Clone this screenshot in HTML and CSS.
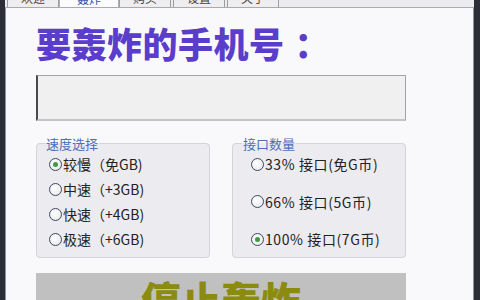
FILE: index.html
```html
<!DOCTYPE html>
<html lang="zh-CN">
<head>
<meta charset="utf-8">
<title>轰炸</title>
<link rel="stylesheet" href="styles.css">
</head>
<body>
<div class="window">
  <div class="tabstrip">
    <div class="tab">欢迎</div>
    <div class="tab active">轰炸</div>
    <div class="tab">购买</div>
    <div class="tab">设置</div>
    <div class="tab">关于</div>
  </div>
  <div class="page">
    <h1 class="title">要轰炸的手机号<span class="colon">：</span></h1>
    <div class="phone-input"></div>
    <div class="groups">
      <fieldset class="group speed">
        <legend>速度选择</legend>
        <div class="rows">
          <label class="radio"><span class="dot checked"></span>较慢（免GB)</label>
          <label class="radio"><span class="dot"></span>中速（+3GB)</label>
          <label class="radio"><span class="dot"></span>快速（+4GB)</label>
          <label class="radio"><span class="dot"></span>极速（+6GB)</label>
        </div>
      </fieldset>
      <fieldset class="group ports">
        <legend>接口数量</legend>
        <div class="rows">
          <label class="radio"><span class="dot"></span>33% 接口(免G币)</label>
          <label class="radio"><span class="dot"></span>66% 接口(5G币)</label>
          <label class="radio"><span class="dot checked"></span>100% 接口(7G币)</label>
        </div>
      </fieldset>
    </div>
    <div class="stop-btn">停止轰炸</div>
  </div>
</div>
</body>
</html>
```

FILE: styles.css
```css
html, body {
  margin: 0;
  padding: 0;
  width: 480px;
  height: 300px;
  overflow: hidden;
  background: #2b2e37;
}

.window {
  width: 480px;
  height: 300px;
  box-sizing: border-box;
  border-left: 5px solid #2b2e37;
  border-right: 6px solid #2b2e37;
  background: #f9f9fc;
  display: flex;
  flex-direction: column;
  font-family: "Noto Sans CJK SC", "Noto Sans", sans-serif;
  box-shadow: inset 1px 0 0 #8d929c, inset -1px 0 0 #8d929c;
  overflow: hidden;
}

.tabstrip {
  height: 8px;
  flex: none;
  display: flex;
  align-items: flex-end;
  background: #ecebf0;
  border-bottom: 1px solid #a9a9ae;
  box-sizing: border-box;
  padding-left: 2px;
  overflow: hidden;
}

.tab {
  width: 52px;
  height: 20px;
  margin-right: 2px;
  box-sizing: border-box;
  border: 1px solid #9c9ca2;
  border-bottom: none;
  background: #eeeef0;
  font-size: 12px;
  line-height: 12px;
  color: #444;
  text-align: center;
  display: flex;
  align-items: flex-end;
  justify-content: center;
  padding-bottom: 3px;
}

.tab.active {
  width: 60px;
  background: #fbfbfd;
  border-color: #b0b0b6;
  color: #3550b0;
  margin-left: -2px;
  margin-right: 0;
  height: 22px;
  margin-bottom: -1px;
}

.page {
  flex: 1;
  padding: 15px 0 0 31px;
}

.title {
  margin: 0;
  font-size: 35px;
  line-height: 40px;
  font-weight: 900;
  color: #5a3dcb;
  letter-spacing: 0.5px;
}

.colon {
  margin-left: 10px;
}

.phone-input {
  margin-top: 12px;
  width: 370px;
  height: 46px;
  box-sizing: border-box;
  background: #f0f0f0;
  border: 1px solid #a2a2a6;
  border-left: 2px solid #4a4a4e;
  border-bottom: 2px solid #c4c4c8;
}

.groups {
  margin-top: 16px;
  display: flex;
  gap: 22px;
}

.group {
  margin: 0;
  width: 174px;
  box-sizing: border-box;
  border: 1px solid #d3d3da;
  border-radius: 4px;
  background: #ebebf0;
  padding: 7px 0 11px 12px;
  min-width: 0;
}

.group.ports {
  padding-left: 18px;
}

.group legend {
  font-size: 13px;
  line-height: 13px;
  color: #4c6fb9;
  padding: 0 1px;
  margin-left: -4px;
}

.group.ports legend {
  margin-left: -9px;
}

.rows {
  height: 89px;
  display: flex;
  flex-direction: column;
  justify-content: space-between;
}

.radio {
  height: 14px;
  display: flex;
  align-items: center;
  font-size: 14px;
  line-height: 14px;
  color: #222;
  white-space: nowrap;
}

.ports .radio {
  letter-spacing: 0.6px;
}

.dot {
  width: 11px;
  height: 11px;
  border: 1.5px solid #3e4a5c;
  border-radius: 50%;
  background: radial-gradient(circle at 40% 40%, #ffffff 0%, #e2e4ea 100%);
  margin-right: 1px;
  position: relative;
  flex: none;
}

.dot.checked::after {
  content: "";
  position: absolute;
  left: 3px;
  top: 3px;
  width: 5px;
  height: 5px;
  border-radius: 50%;
  background: #3f9a45;
}

.stop-btn {
  margin-top: 15px;
  width: 370px;
  height: 44px;
  background: #c0c0c1;
  color: #8b8b10;
  font-size: 40px;
  font-weight: 900;
  line-height: 40px;
  text-align: center;
  padding-top: 6px;
  box-sizing: border-box;
}
```
